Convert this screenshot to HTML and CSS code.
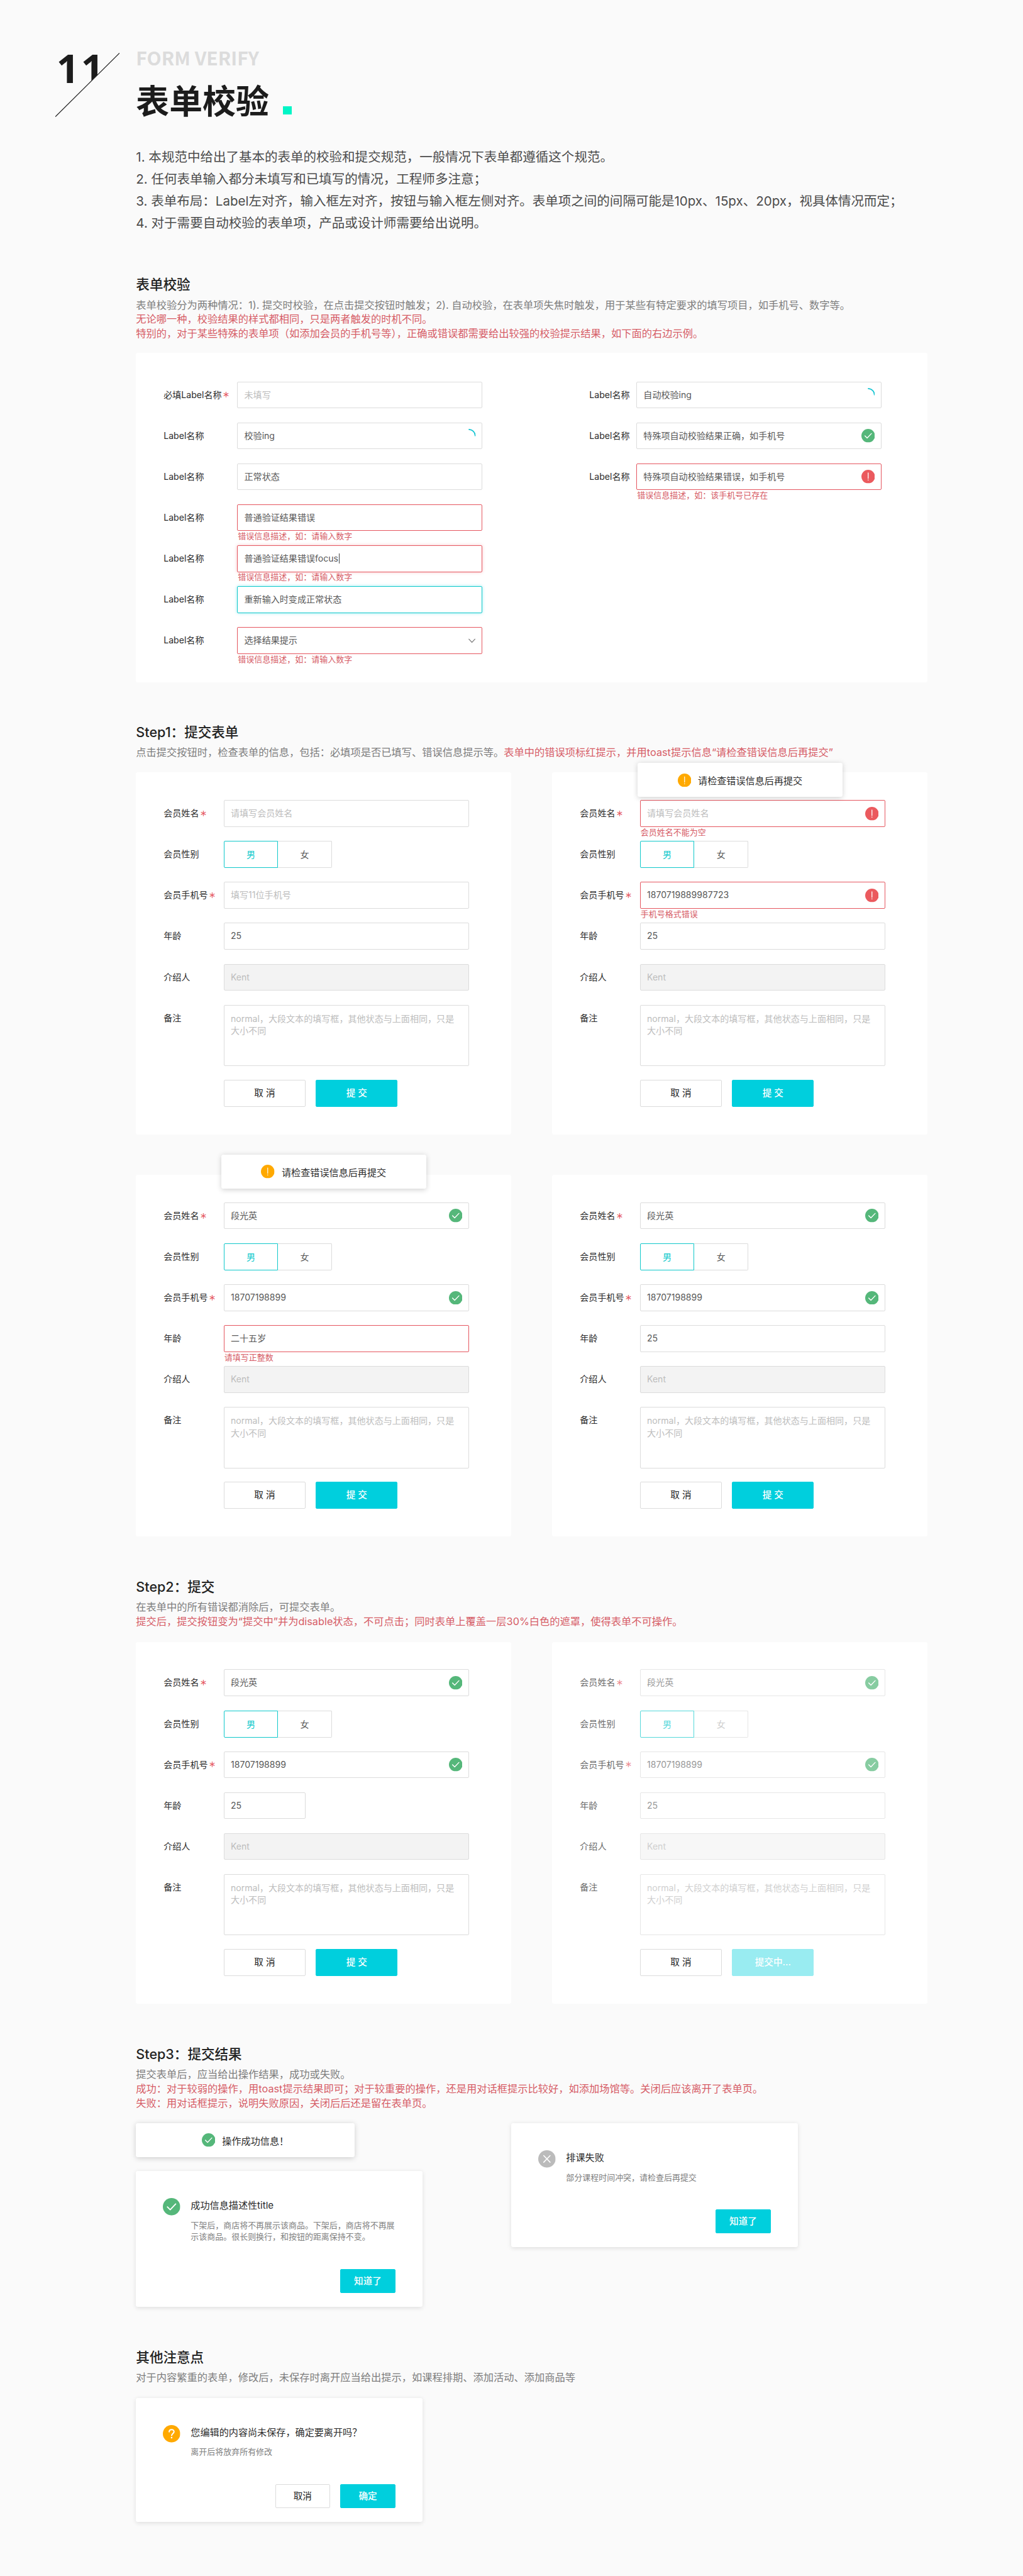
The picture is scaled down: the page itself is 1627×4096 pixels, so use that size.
FILE: index.html
```html
<!DOCTYPE html>
<html lang="zh-CN">
<head>
<meta charset="utf-8">
<title>表单校验</title>
<link rel="stylesheet" href="styles.css">
</head>
<body>
<svg class="sprite" aria-hidden="true">
  <symbol id="ok" viewBox="0 0 26 26"><circle cx="13" cy="13" r="13" fill="#55b77a"/><path d="M6.8 13.2l4.2 4.3 8.2-8.6" fill="none" stroke="#fff" stroke-width="1.7" stroke-linecap="round" stroke-linejoin="round"/></symbol>
  <symbol id="err" viewBox="0 0 26 26"><circle cx="13" cy="13" r="13" fill="#eb5a5e"/><path d="M13 6v10.6" stroke="#fff" stroke-width="1.6" stroke-linecap="round"/><circle cx="13" cy="19.6" r="1" fill="#fff"/></symbol>
  <symbol id="warn" viewBox="0 0 26 26"><circle cx="13" cy="13" r="13" fill="#ffa900"/><path d="M13 6v10.6" stroke="#fff" stroke-width="1.4" stroke-linecap="round"/><circle cx="13" cy="19.6" r=".9" fill="#fff"/></symbol>
  <symbol id="fail" viewBox="0 0 26 26"><circle cx="13" cy="13" r="13" fill="#bbb"/><path d="M8.2 8l9.6 10M17.8 8L8.2 18" stroke="#fff" stroke-width="1.4" stroke-linecap="round"/></symbol>
  <symbol id="ask" viewBox="0 0 26 26"><circle cx="13" cy="13" r="13" fill="#ffa900"/><path d="M9.5 10.2c0-4.6 7.2-4.4 7.2-.3 0 2.7-3.5 2.9-3.5 5.7" fill="none" stroke="#fff" stroke-width="1.9" stroke-linecap="round"/><circle cx="13.1" cy="18.9" r="1.2" fill="#fff"/></symbol>
  <symbol id="spin" viewBox="0 0 26 26"><path d="M12.5 1A12 12 0 0 1 25 13.8" fill="none" stroke="#12c4d2" stroke-width="2"/></symbol>
  <symbol id="down" viewBox="0 0 26 26"><path d="M12.6 9.5l6.2 6.6 6.2-6.6" fill="none" stroke="#777" stroke-width="1.4"/></symbol>
</svg>

<header class="head">
  <div class="num">
    <div class="num-clip"><span class="num-text">11</span></div>
    <svg class="slash" viewBox="0 0 126 125" preserveAspectRatio="none"><path d="M126 0L0 125" stroke="#222" stroke-width="1.5"/></svg>
  </div>
  <div class="titles">
    <div class="en">FORM VERIFY</div>
    <h1 class="title">表单校验<i class="dot"></i></h1>
  </div>
</header>

<main class="page">
  <div class="intro">
    <p>1. 本规范中给出了基本的表单的校验和提交规范，一般情况下表单都遵循这个规范。</p>
    <p>2. 任何表单输入都分未填写和已填写的情况，工程师多注意；</p>
    <p>3. 表单布局：Label左对齐，输入框左对齐，按钮与输入框左侧对齐。表单项之间的间隔可能是10px、15px、20px，视具体情况而定；</p>
    <p>4. 对于需要自动校验的表单项，产品或设计师需要给出说明。</p>
  </div>

  <section class="sec">
    <h2>表单校验</h2>
    <div class="desc tight">
      <p>表单校验分为两种情况：1). 提交时校验，在点击提交按钮时触发；2). 自动校验，在表单项失焦时触发，用于某些有特定要求的填写项目，如手机号、数字等。</p>
      <p class="red">无论哪一种，校验结果的样式都相同，只是两者触发的时机不同。</p>
      <p class="red">特别的，对于某些特殊的表单项（如添加会员的手机号等），正确或错误都需要给出较强的校验提示结果，如下面的右边示例。</p>
    </div>
    <div class="card states">
      <div class="form wide">
        <div class="row"><label>必填Label名称<b>*</b></label><div class="inp ph">未填写</div></div>
        <div class="row"><label>Label名称</label><div class="inp">校验ing<svg><use href="#spin"/></svg></div></div>
        <div class="row"><label>Label名称</label><div class="inp">正常状态</div></div>
        <div class="row"><label>Label名称</label><div class="inp bad">普通验证结果错误<em>错误信息描述，如：请输入数字</em></div></div>
        <div class="row"><label>Label名称</label><div class="inp bad glow">普通验证结果错误focus<i class="caret"></i><em>错误信息描述，如：请输入数字</em></div></div>
        <div class="row"><label>Label名称</label><div class="inp focus">重新输入时变成正常状态</div></div>
        <div class="row"><label>Label名称</label><div class="inp bad">选择结果提示<svg><use href="#down"/></svg><em>错误信息描述，如：请输入数字</em></div></div>
      </div>
      <div class="form narrow">
        <div class="row"><label>Label名称</label><div class="inp">自动校验ing<svg><use href="#spin"/></svg></div></div>
        <div class="row"><label>Label名称</label><div class="inp">特殊项自动校验结果正确，如手机号<svg><use href="#ok"/></svg></div></div>
        <div class="row"><label>Label名称</label><div class="inp bad">特殊项自动校验结果错误，如手机号<svg><use href="#err"/></svg><em>错误信息描述，如：该手机号已存在</em></div></div>
      </div>
    </div>
  </section>

  <section class="sec second">
    <h2>Step1：提交表单</h2>
    <div class="desc">
      <p>点击提交按钮时，检查表单的信息，包括：必填项是否已填写、错误信息提示等。<span class="red">表单中的错误项标红提示，并用toast提示信息“请检查错误信息后再提交”</span></p>
    </div>
    <div class="cards">
      <div class="card form">
        <div class="row"><label>会员姓名<b>*</b></label><div class="inp ph">请填写会员姓名</div></div>
        <div class="row"><label>会员性别</label><div class="seg"><span class="on">男</span><span>女</span></div></div>
        <div class="row"><label>会员手机号<b>*</b></label><div class="inp ph">填写11位手机号</div></div>
        <div class="row"><label>年龄</label><div class="inp">25</div></div>
        <div class="row"><label>介绍人</label><div class="inp off">Kent</div></div>
        <div class="row area"><label>备注</label><div class="inp ph">normal，大段文本的填写框，其他状态与上面相同，只是大小不同</div></div>
        <div class="btns"><span class="btn">取 消</span><span class="btn main">提 交</span></div>
      </div>
      <div class="card form">
        <div class="toast near"><svg><use href="#warn"/></svg>请检查错误信息后再提交</div>
        <div class="row"><label>会员姓名<b>*</b></label><div class="inp ph bad">请填写会员姓名<svg><use href="#err"/></svg><em>会员姓名不能为空</em></div></div>
        <div class="row"><label>会员性别</label><div class="seg"><span class="on">男</span><span>女</span></div></div>
        <div class="row"><label>会员手机号<b>*</b></label><div class="inp bad">1870719889987723<svg><use href="#err"/></svg><em>手机号格式错误</em></div></div>
        <div class="row"><label>年龄</label><div class="inp">25</div></div>
        <div class="row"><label>介绍人</label><div class="inp off">Kent</div></div>
        <div class="row area"><label>备注</label><div class="inp ph">normal，大段文本的填写框，其他状态与上面相同，只是大小不同</div></div>
        <div class="btns"><span class="btn">取 消</span><span class="btn main">提 交</span></div>
      </div>
      <div class="card form">
        <div class="toast far"><svg><use href="#warn"/></svg>请检查错误信息后再提交</div>
        <div class="row"><label>会员姓名<b>*</b></label><div class="inp">段光英<svg><use href="#ok"/></svg></div></div>
        <div class="row"><label>会员性别</label><div class="seg"><span class="on">男</span><span>女</span></div></div>
        <div class="row"><label>会员手机号<b>*</b></label><div class="inp">18707198899<svg><use href="#ok"/></svg></div></div>
        <div class="row"><label>年龄</label><div class="inp bad">二十五岁<em>请填写正整数</em></div></div>
        <div class="row"><label>介绍人</label><div class="inp off">Kent</div></div>
        <div class="row area"><label>备注</label><div class="inp ph">normal，大段文本的填写框，其他状态与上面相同，只是大小不同</div></div>
        <div class="btns"><span class="btn">取 消</span><span class="btn main">提 交</span></div>
      </div>
      <div class="card form">
        <div class="row"><label>会员姓名<b>*</b></label><div class="inp">段光英<svg><use href="#ok"/></svg></div></div>
        <div class="row"><label>会员性别</label><div class="seg"><span class="on">男</span><span>女</span></div></div>
        <div class="row"><label>会员手机号<b>*</b></label><div class="inp">18707198899<svg><use href="#ok"/></svg></div></div>
        <div class="row"><label>年龄</label><div class="inp">25</div></div>
        <div class="row"><label>介绍人</label><div class="inp off">Kent</div></div>
        <div class="row area"><label>备注</label><div class="inp ph">normal，大段文本的填写框，其他状态与上面相同，只是大小不同</div></div>
        <div class="btns"><span class="btn">取 消</span><span class="btn main">提 交</span></div>
      </div>
    </div>
  </section>

  <section class="sec">
    <h2>Step2：提交</h2>
    <div class="desc">
      <p>在表单中的所有错误都消除后，可提交表单。</p>
      <p class="red">提交后，提交按钮变为“提交中”并为disable状态，不可点击；同时表单上覆盖一层30%白色的遮罩，使得表单不可操作。</p>
    </div>
    <div class="cards">
      <div class="card form">
        <div class="row"><label>会员姓名<b>*</b></label><div class="inp">段光英<svg><use href="#ok"/></svg></div></div>
        <div class="row"><label>会员性别</label><div class="seg"><span class="on">男</span><span>女</span></div></div>
        <div class="row"><label>会员手机号<b>*</b></label><div class="inp">18707198899<svg><use href="#ok"/></svg></div></div>
        <div class="row"><label>年龄</label><div class="inp short">25</div></div>
        <div class="row"><label>介绍人</label><div class="inp off">Kent</div></div>
        <div class="row area"><label>备注</label><div class="inp ph">normal，大段文本的填写框，其他状态与上面相同，只是大小不同</div></div>
        <div class="btns"><span class="btn">取 消</span><span class="btn main">提 交</span></div>
      </div>
      <div class="card form busy">
        <div class="row"><label>会员姓名<b>*</b></label><div class="inp">段光英<svg><use href="#ok"/></svg></div></div>
        <div class="row"><label>会员性别</label><div class="seg"><span class="on">男</span><span>女</span></div></div>
        <div class="row"><label>会员手机号<b>*</b></label><div class="inp">18707198899<svg><use href="#ok"/></svg></div></div>
        <div class="row"><label>年龄</label><div class="inp">25</div></div>
        <div class="row"><label>介绍人</label><div class="inp off">Kent</div></div>
        <div class="row area"><label>备注</label><div class="inp ph">normal，大段文本的填写框，其他状态与上面相同，只是大小不同</div></div>
        <div class="btns"><span class="btn">取 消</span><span class="btn main wait">提交中...</span></div>
      </div>
    </div>
  </section>

  <section class="sec">
    <h2>Step3：提交结果</h2>
    <div class="desc">
      <p>提交表单后，应当给出操作结果，成功或失败。</p>
      <p class="red">成功：对于较弱的操作，用toast提示结果即可；对于较重要的操作，还是用对话框提示比较好，如添加场馆等。关闭后应该离开了表单页。</p>
      <p class="red">失败：用对话框提示，说明失败原因，关闭后后还是留在表单页。</p>
    </div>
    <div class="results">
      <div class="stack">
        <div class="toast done"><svg><use href="#ok"/></svg>操作成功信息！</div>
        <div class="dialog tall">
          <svg><use href="#ok"/></svg>
          <div class="dlg-body"><h3>成功信息描述性title</h3><p>下架后，商店将不再展示该商品。下架后，商店将不再展示该商品。很长则换行，和按钮的距离保持不变。</p></div>
          <div class="acts"><span class="btn main">知道了</span></div>
        </div>
      </div>
      <div class="dialog">
        <svg><use href="#fail"/></svg>
        <div class="dlg-body"><h3>排课失败</h3><p>部分课程时间冲突，请检查后再提交</p></div>
        <div class="acts"><span class="btn main">知道了</span></div>
      </div>
    </div>
  </section>

  <section class="sec">
    <h2>其他注意点</h2>
    <div class="desc">
      <p>对于内容繁重的表单，修改后，未保存时离开应当给出提示，如课程排期、添加活动、添加商品等</p>
    </div>
    <div class="dialog">
      <svg><use href="#ask"/></svg>
      <div class="dlg-body"><h3>您编辑的内容尚未保存，确定要离开吗？</h3><p>离开后将放弃所有修改</p></div>
      <div class="acts"><span class="btn">取消</span><span class="btn main">确定</span></div>
    </div>
  </section>
</main>
</body>
</html>
```
FILE: styles.css
```css
/* 1rem is ten design pixels */
html { font-size: 8.1335px; }
* { box-sizing: border-box; margin: 0; padding: 0; }
body {
  background: #fafafa;
  color: #333;
  font-family: Inter, "Noto Sans CJK SC", sans-serif;
  font-size: 1.73rem;
  height: 4096px;
  overflow: hidden;
}
i, em { font-style: normal; }
.sprite { position: absolute; width: 0; height: 0; }

/* header */
.head { display: flex; padding: 9rem 0 0 10.8rem; }
.num { position: relative; width: 15.8rem; height: 12.5rem; margin-top: 1.35rem; flex: none; }
.num-clip { width: 12.6rem; height: 12.5rem; clip-path: polygon(0 0, 100% 0, 0 100%); }
.num-text {
  display: block; padding-left: .25rem; line-height: 6rem;
  font-family: "Open Sans", "Noto Sans", sans-serif; font-weight: 700; font-size: 7.8rem; color: #1c1c1c;
  letter-spacing: .32rem;
}
.slash { position: absolute; left: 0; top: 0; width: 12.6rem; height: 12.5rem; }
.en { font: 700 3.7rem/4.5rem "Noto Sans CJK SC", sans-serif; color: #dcdcdc; white-space: nowrap; }
.title {
  display: flex; align-items: flex-end; margin-top: 1.1rem;
  font: 700 6.5rem/9.6rem "Noto Sans CJK SC", sans-serif; color: #1c1c1c; white-space: nowrap;
}
.dot { width: 1.65rem; height: 1.65rem; margin: 0 0 1.8rem 2.75rem; background: #00f5c6; }

.page { width: 154.8rem; margin-left: 26.6rem; }
.intro { margin-top: 4.5rem; font-size: 2.525rem; line-height: 4.27rem; color: #4c4c4c; white-space: nowrap; }

/* sections */
.sec { margin-top: 8.1rem; }
.sec.second { margin-top: 8rem; }
h2 { font-size: 2.65rem; line-height: 3.6rem; font-weight: 500; color: #222; white-space: nowrap; }
.desc { margin: .75rem 0 2.55rem; font-size: 2rem; line-height: 2.8rem; color: #7d7d7d; white-space: nowrap; }
.desc.tight { margin-bottom: 2.3rem; }
.second .desc { margin-bottom: 2.5rem; }
.red { color: #d65c66; }
.card { background: #fff; border-radius: .4rem; }
.cards { display: grid; grid-template-columns: 73.4rem 73.4rem; gap: 7.9rem 8rem; }
.cards .card { position: relative; height: 70.72rem; padding: 5.4rem; }
.states { display: flex; height: 64.45rem; padding: 5.65rem 5.4rem; }
.states .narrow { margin-left: 20.9rem; }

/* form rows */
.row { display: flex; height: 8rem; --label: 11.75rem; }
.row label { width: var(--label); flex: none; line-height: 5.2rem; white-space: nowrap; color: #2b2b2b; }
.wide .row { --label: 14.4rem; }
.narrow .row { --label: 9.2rem; }
.row b { margin-left: .2rem; color: #e5565f; font-weight: 300; font-size: 2.6rem; line-height: 1; vertical-align: -.85rem; }
.inp {
  position: relative; width: 47.95rem; height: 5.25rem; padding: 0 1.25rem; line-height: 5rem;
  border: 1px solid #dcdcdc; border-radius: .25rem; color: #595959; background: #fff; white-space: nowrap;
}
.inp svg { position: absolute; right: 1.2rem; top: 1.2rem; width: 2.65rem; height: 2.65rem; }
.inp em { position: absolute; left: 0; top: 5rem; font-size: 1.6rem; line-height: 2.4rem; color: #d65c66; }
.ph, .off { color: #bdbdbd; }
.off { background: #f3f3f3; }
.bad { border-color: #e5565f; }
.glow { box-shadow: 0 0 .6rem rgba(229, 86, 95, .35); }
.focus { border-color: #10c8cb; box-shadow: 0 0 .6rem rgba(0, 207, 220, .4); }
.short { width: 16rem; }
.caret { display: inline-block; width: 1px; height: 2rem; margin-left: .1rem; background: #444; vertical-align: -.4rem; }
.area { height: 14.65rem; }
.area .inp { height: 12rem; padding-top: 1.35rem; line-height: 2.42rem; white-space: normal; }
.seg { display: flex; height: 5.3rem; }
.seg span { width: 10.6rem; border: 1px solid #dcdcdc; border-left: 0; border-radius: 0 .25rem .25rem 0; text-align: center; line-height: 5.2rem; color: #555; }
.seg .on { border: 1px solid #10c8cb; border-radius: .25rem 0 0 .25rem; color: #10c8cb; }

.btns { display: flex; gap: 2rem; padding-left: 11.75rem; }
.btn {
  width: 16rem; height: 5.3rem; border: 1px solid #dcdcdc; border-radius: .25rem; background: #fff;
  text-align: center; font-size: 1.8rem; line-height: 5.1rem; color: #222;
}
.btn.main { border-color: #00cfdd; background: #00cfdd; color: #fff; font-weight: 500; }
.btn.main.wait { border-color: #99ecf1; background: #99ecf1; }

/* form under a white veil */
.busy label, .busy .on, .busy .inp svg { opacity: .7; }
.busy .inp { color: #999; border-color: #e6e6e6; }
.busy .ph, .busy .off { color: #d0d0d0; }
.busy .off { background: #f7f7f7; }
.busy .seg span:not(.on) { color: #ccc; border-color: #e6e6e6; }

/* toasts and dialogs */
.toast {
  display: flex; align-items: center; justify-content: center; gap: 1.35rem;
  width: 40rem; height: 6.65rem; background: #fff; border-radius: .4rem;
  box-shadow: 0 .2rem 1rem rgba(0, 0, 0, .18); font-size: 1.86rem; color: #2b2b2b; white-space: nowrap;
}
.toast svg { width: 2.65rem; height: 2.65rem; }
.near, .far { position: absolute; z-index: 1; left: 16.7rem; top: -1.85rem; }
.far { top: -3.9rem; }
.done { width: 42.7rem; }
.results { display: flex; gap: 17.4rem; align-items: flex-start; }
.stack { display: flex; flex-direction: column; gap: 2.7rem; }
.dialog {
  display: grid; grid-template-columns: 3.4rem minmax(0, 1fr); grid-template-rows: auto 4.7rem; column-gap: 2rem; align-content: space-between;
  width: 56rem; height: 24.25rem; padding: 5.3rem 5.3rem 2.7rem; background: #fff; border-radius: .4rem;
  box-shadow: 0 .2rem .9rem rgba(0, 0, 0, .11);
}
.dialog.tall { height: 26.55rem; }
.dialog svg { width: 3.4rem; height: 3.4rem; }
.dialog h3 { font-size: 1.86rem; font-weight: 400; line-height: 3rem; color: #2b2b2b; white-space: nowrap; }
.dialog p { width: 40rem; margin-top: 1.1rem; font-size: 1.595rem; line-height: 2.25rem; color: #808080; }
.acts { grid-column: 1 / 3; display: flex; justify-content: flex-end; gap: 2rem; }
.acts .btn { width: 10.75rem; height: 4.7rem; line-height: 4.5rem; }
```
